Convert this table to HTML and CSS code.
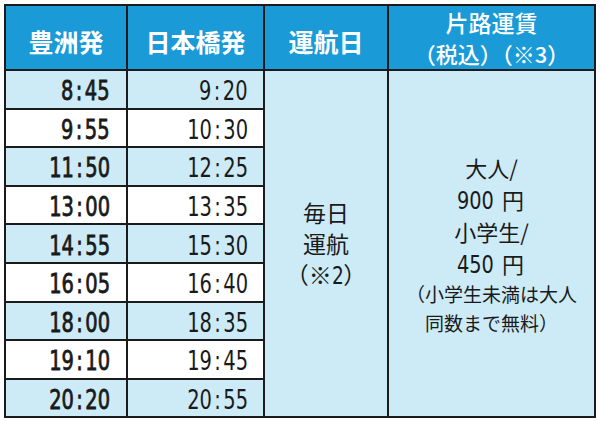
FILE: index.html
```html
<!DOCTYPE html>
<html lang="ja">
<head>
<meta charset="utf-8">
<link rel="stylesheet" href="styles.css">
</head>
<body>
<table class="timetable">
  <colgroup>
    <col class="c1"><col class="c2"><col class="c3"><col class="c4">
  </colgroup>
  <thead>
    <tr>
      <th class="h-single">豊洲発</th>
      <th class="h-single">日本橋発</th>
      <th class="h-single">運航日</th>
      <th class="h-double"><span class="hl">片路運賃</span><span class="hl hl-sub">（税込）（※3）</span></th>
    </tr>
  </thead>
  <tbody>
    <tr class="blue">
      <td class="t t-bold"><span class="tm">8<span class="colon">:</span>45</span></td>
      <td class="t"><span class="tm">9<span class="colon">:</span>20</span></td>
      <td class="days" rowspan="9"><span class="line">毎日</span><span class="line">運航</span><span class="line">（※<span class="num">2</span>）</span></td>
      <td class="fare" rowspan="9">
        <span class="line">大人/</span>
        <span class="line"><span class="num">900</span> 円</span>
        <span class="line">小学生/</span>
        <span class="line"><span class="num">450</span> 円</span>
        <span class="note">（小学生未満は大人</span>
        <span class="note">同数まで無料）</span>
      </td>
    </tr>
    <tr><td class="t t-bold"><span class="tm">9<span class="colon">:</span>55</span></td><td class="t"><span class="tm">10<span class="colon">:</span>30</span></td></tr>
    <tr class="blue"><td class="t t-bold"><span class="tm">11<span class="colon">:</span>50</span></td><td class="t"><span class="tm">12<span class="colon">:</span>25</span></td></tr>
    <tr><td class="t t-bold"><span class="tm">13<span class="colon">:</span>00</span></td><td class="t"><span class="tm">13<span class="colon">:</span>35</span></td></tr>
    <tr class="blue"><td class="t t-bold"><span class="tm">14<span class="colon">:</span>55</span></td><td class="t"><span class="tm">15<span class="colon">:</span>30</span></td></tr>
    <tr><td class="t t-bold"><span class="tm">16<span class="colon">:</span>05</span></td><td class="t"><span class="tm">16<span class="colon">:</span>40</span></td></tr>
    <tr class="blue"><td class="t t-bold"><span class="tm">18<span class="colon">:</span>00</span></td><td class="t"><span class="tm">18<span class="colon">:</span>35</span></td></tr>
    <tr><td class="t t-bold"><span class="tm">19<span class="colon">:</span>10</span></td><td class="t"><span class="tm">19<span class="colon">:</span>45</span></td></tr>
    <tr class="blue"><td class="t t-bold"><span class="tm">20<span class="colon">:</span>20</span></td><td class="t"><span class="tm">20<span class="colon">:</span>55</span></td></tr>
  </tbody>
</table>
</body>
</html>
```
FILE: styles.css
```css
html, body {
  margin: 0;
  padding: 0;
  background: #ffffff;
}

body {
  padding: 4px 0 0 4px;
  font-family: "Noto Sans CJK JP", sans-serif;
  color: #1a1a1a;
}

.timetable {
  border-collapse: collapse;
  table-layout: fixed;
  width: 590px;
  border: 2px solid #1b1b1b;
}

.c1 { width: 122px; }
.c2 { width: 137px; }
.c3 { width: 124px; }
.c4 { width: 207px; }

.timetable th,
.timetable td {
  border: 2px solid #1b1b1b;
  padding: 0;
}

.timetable thead tr {
  height: 65px;
}

.timetable th {
  background: #1a9ad7;
  color: #ffffff;
  font-family: "Noto Sans CJK JP", sans-serif;
  text-align: center;
  vertical-align: middle;
}

.h-single {
  font-size: 25px;
  font-weight: 700;
  padding-top: 6px !important;
}

.h-double {
  font-size: 23px;
  font-weight: 500;
  line-height: 31px;
}

.hl {
  display: block;
}

.hl-sub {
  font-size: 22px;
}

.timetable tbody tr {
  height: 38.6px;
  background: #ffffff;
}

.timetable tbody tr.blue {
  background: #cdeaf7;
}

.t {
  text-align: right;
  padding-right: 16px !important;
  font-family: "DejaVu Sans Condensed", "DejaVu Sans", sans-serif;
  font-size: 27px;
  line-height: 1;
  vertical-align: middle;
  white-space: nowrap;
}

.t + .t {
  padding-right: 15px !important;
}

.tm {
  display: inline-block;
  transform: scaleX(0.8);
  transform-origin: right center;
  padding-top: 3px;
}

.t-bold {
  font-weight: 400;
  -webkit-text-stroke: 0.8px #1a1a1a;
}

.colon {
  padding: 0 3px;
}

.days,
.fare {
  background: #cdeaf7;
  text-align: center;
  vertical-align: middle;
}

.days {
  font-size: 23px;
  line-height: 31px;
}

.days .line {
  display: block;
}

.fare {
  font-size: 22px;
  line-height: 32px;
}

.fare .line {
  display: block;
}

.num {
  display: inline-block;
  font-family: "DejaVu Sans Condensed", "DejaVu Sans", sans-serif;
  font-size: 25px;
  line-height: 1;
  transform: scaleX(0.86);
  margin: 0 0 0 -5px;
}

.days .num {
  font-size: 24px;
  margin: 0 -1px;
}

.note {
  display: block;
  font-size: 19px;
  line-height: 29px;
}
```
